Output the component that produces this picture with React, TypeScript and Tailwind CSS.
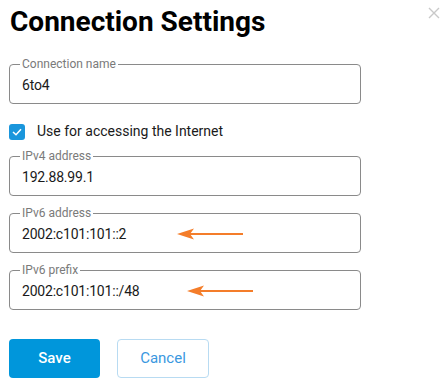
import React from 'react';

const Arrow = () => (
  <svg width="66" height="12" viewBox="0 0 66 12" className="shrink-0">
    <path d="M0 6 L17 0.5 L13 6 L17 11.5 Z" fill="#f47d2a" />
    <line x1="13" y1="6" x2="66" y2="6" stroke="#f47d2a" strokeWidth="2" />
  </svg>
);

function Field({ label, value, arrowGap }: { label: string; value: string; arrowGap?: string }) {
  return (
    <fieldset className="w-[352px] h-[47px] border border-[#8a8a8a] rounded-[4px] px-[12px]">
      <legend className="px-[2px] -ml-[2px] text-[12px] leading-[14px] text-[#7a7a7a]">{label}</legend>
      <div className="flex items-center h-[28px] text-[14px] tracking-[-0.2px] text-[#1a1a1a]">
        <span>{value}</span>
        {arrowGap && (
          <span className={arrowGap}>
            <Arrow />
          </span>
        )}
      </div>
    </fieldset>
  );
}

export default function App() {
  return (
    <div className="w-[447px] h-[384px] bg-white px-[9px] font-['Roboto',sans-serif]">
      <div className="flex justify-between items-start">
        <h2 className="text-[28px] leading-[32px] font-bold text-black mt-[6px] ml-[1px]">Connection Settings</h2>
        <svg width="12" height="12" viewBox="0 0 12 12" className="mt-[7px] -mr-[2px]">
          <path d="M1 1 L11 11 M11 1 L1 11" stroke="#c9c9c9" strokeWidth="1.4" />
        </svg>
      </div>

      <div className="mt-[19px]">
        <Field label="Connection name" value="6to4" />
      </div>

      <label className="flex items-center h-[55px] gap-[12px]">
        <span className="w-[16px] h-[16px] rounded-[3px] bg-[#1a96dc] flex items-center justify-center">
          <svg width="10" height="8" viewBox="0 0 10 8">
            <path d="M1 4 L4 6.8 L9 1.2" stroke="white" strokeWidth="1.5" fill="none" />
          </svg>
        </span>
        <span className="text-[14px] text-[#1a1a1a]">Use for accessing the Internet</span>
      </label>

      <div className="flex flex-col gap-[10px] -mt-[10px]">
        <Field label="IPv4 address" value="192.88.99.1" />
        <Field label="IPv6 address" value="2002:c101:101::2" arrowGap="ml-[51px]" />
        <Field label="IPv6 prefix" value="2002:c101:101::/48" arrowGap="ml-[47px]" />
      </div>

      <div className="flex gap-[17px] mt-[29px]">
        <button className="w-[91px] h-[39px] rounded-[4px] bg-[#0096db] text-white text-[15px] font-medium">Save</button>
        <button className="w-[92px] h-[39px] rounded-[4px] border border-[#b8dbf2] bg-white text-[#3a98df] text-[15px]">Cancel</button>
      </div>
    </div>
  );
}
